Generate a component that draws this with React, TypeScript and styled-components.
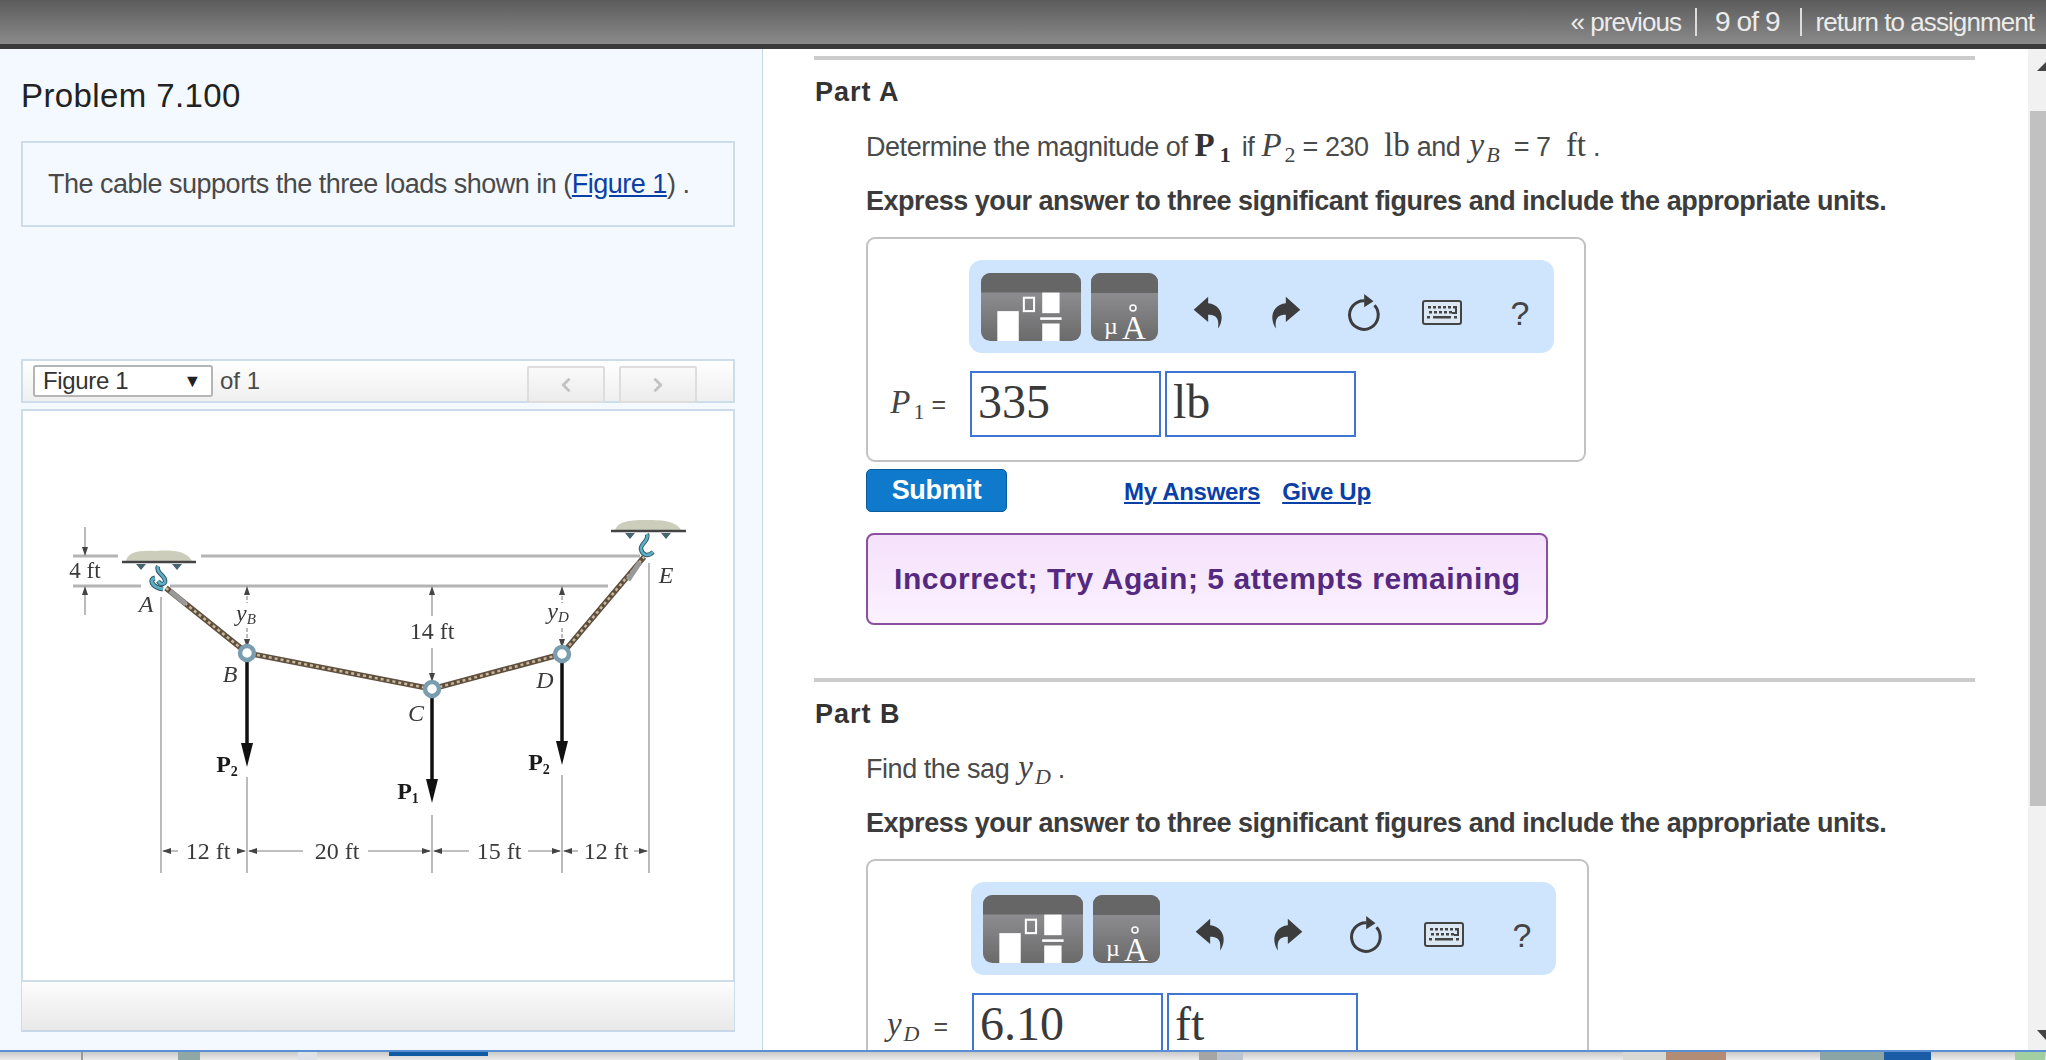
import styled, { createGlobalStyle } from "styled-components";
import { ChevronLeft, ChevronRight } from "lucide-react";

const GlobalStyle = createGlobalStyle`
  html, body {
    margin: 0;
    padding: 0;
    background: #fff;
    overflow: hidden;
  }
  body {
    font-family: "Liberation Sans", Arial, sans-serif;
    color: #4a4a4a;
  }
`;

const Page = styled.div`
  width: 2046px;
  height: 1060px;
  display: flex;
  flex-direction: column;
  overflow: hidden;
`;

const Header = styled.header`
  height: 49px;
  box-sizing: border-box;
  flex: none;
  display: flex;
  justify-content: flex-end;
  align-items: center;
  background: linear-gradient(#5c5c5c, #8a8a8a);
  border-bottom: 5px solid #3a3a3a;
  color: #ececec;
  font-size: 26px;
  letter-spacing: -0.93px;
`;

const NavItem = styled.span<{ $wide?: boolean }>`
  padding: ${(p) => (p.$wide ? "0 20px 0 18px" : "0 14px")};
  font-size: ${(p) => (p.$wide ? "28px" : "26px")};
  line-height: 28px;
  & + & {
    border-left: 2px solid #ddd;
  }
  &:last-child {
    padding-right: 12px;
  }
`;

const Main = styled.main`
  height: 1003px;
  box-sizing: border-box;
  flex: none;
  display: flex;
  border-bottom: 2px solid #5b8fd3;
`;

const LeftPanel = styled.aside`
  width: 763px;
  box-sizing: border-box;
  flex: none;
  padding: 27px 27px 0 21px;
  background: #f4f9ff;
  border-right: 1px solid #c6d6e6;
`;

const Title = styled.h1`
  margin: 0;
  font-size: 33px;
  line-height: 40px;
  font-weight: 400;
  color: #222;
  letter-spacing: 0.4px;
`;

const Statement = styled.div`
  margin-top: 25px;
  height: 86px;
  box-sizing: border-box;
  border: 2px solid #cddcea;
  padding: 0 25px;
  display: flex;
  align-items: center;
  font-size: 27px;
  letter-spacing: -0.5px;
`;

const FigureLink = styled.a`
  color: #0b3fa8;
  text-decoration: underline;
`;

const FigureBar = styled.div`
  margin-top: 132px;
  height: 44px;
  box-sizing: border-box;
  border: 2px solid #cddcea;
  padding: 0 36px 0 10px;
  display: flex;
  align-items: center;
  background: linear-gradient(#fff, #efefef);
  font-size: 24px;
`;

const SelectBox = styled.div`
  width: 180px;
  height: 32px;
  box-sizing: border-box;
  padding: 0 10px 0 8px;
  display: flex;
  align-items: center;
  justify-content: space-between;
  background: #fff;
  border: 2px solid #b5b5b5;
  border-radius: 3px;
  color: #333;
  letter-spacing: -0.35px;
`;

const SelectArrow = styled.span`
  font-size: 18px;
  color: #222;
`;

const OfText = styled.span`
  margin-left: 7px;
`;

const PagerGroup = styled.div`
  margin-left: auto;
  align-self: flex-end;
  margin-bottom: -2px;
  display: flex;
  gap: 14px;
`;

const PagerButton = styled.div`
  width: 78px;
  height: 37px;
  box-sizing: border-box;
  display: flex;
  align-items: center;
  justify-content: center;
  border: 2px solid #ddd;
  border-radius: 2px;
  background: linear-gradient(#fafafa, #ececec);
  color: #c2c2c2;
`;

const ImagePanel = styled.div`
  margin-top: 6px;
  height: 573px;
  box-sizing: border-box;
  border: 2px solid #cddcea;
  background: #fff;
`;

const FigureSvg = styled.svg`
  display: block;
  filter: blur(0.6px);
`;

const FigureFooter = styled.div`
  height: 50px;
  box-sizing: border-box;
  border: 1px solid #cddcea;
  border-top: none;
  border-bottom: 2px solid #c8d8e8;
  background: linear-gradient(#fcfcfc, #e9e9e9);
`;

const RightPane = styled.section`
  flex: 1;
  min-width: 0;
  box-sizing: border-box;
  padding: 7px 53px 0 51px;
  overflow: hidden;
  background: #fff;
`;

const Divider = styled.div<{ $gap?: number }>`
  height: 4px;
  margin-top: ${(p) => p.$gap ?? 0}px;
  background: #ccc;
`;

const PartTitle = styled.h2`
  margin: 17px 0 0 1px;
  font-size: 27px;
  line-height: 30px;
  color: #333;
  letter-spacing: 1px;
`;

const PartBody = styled.div`
  padding-left: 52px;
`;

const Question = styled.p`
  margin: 21px 0 0;
  height: 34px;
  font-size: 27px;
  line-height: 34px;
  letter-spacing: -0.45px;
  white-space: nowrap;
`;

const MathText = styled.span`
  font-family: "Liberation Serif", "Times New Roman", serif;
  font-size: 33px;
  letter-spacing: 0;
  color: #444;
`;

const MathBold = styled(MathText)`
  font-weight: 700;
  color: #333;
  margin-right: 6px;
  letter-spacing: 5px;
`;

const MathItalic = styled(MathText)`
  font-style: italic;
  letter-spacing: 1px;
  margin-right: 2px;
`;

const MathVar = styled(MathItalic)`
  margin: 0 5px 0 2px;
  letter-spacing: 2px;
`;

const MathSub = styled.sub`
  font-size: 22px;
  line-height: 0;
  vertical-align: -6px;
`;

const Instruction = styled.p`
  margin: 22px 0 0;
  height: 34px;
  font-size: 27px;
  line-height: 34px;
  font-weight: 700;
  color: #3c3c3c;
  letter-spacing: -0.47px;
  white-space: nowrap;
`;

const AnswerBox = styled.div<{ $w?: number }>`
  margin-top: 19px;
  height: 225px;
  box-sizing: border-box;
  width: ${(p) => p.$w ?? 720}px;
  padding-top: 21px;
  border: 2px solid #c2c2c2;
  border-radius: 9px;
`;

const Toolbar = styled.div<{ $shift?: number }>`
  margin-left: ${(p) => 101 + (p.$shift ?? 0)}px;
  width: 585px;
  height: 93px;
  box-sizing: border-box;
  padding-left: 12px;
  display: flex;
  align-items: center;
  background: #cfe5fd;
  border-radius: 13px;
  & > svg {
    flex: none;
  }
`;

const TemplateGap = styled.div`
  width: 10px;
  flex: none;
`;

const ToolsGroup = styled.div`
  margin-left: 11px;
  flex: none;
  display: flex;
`;

const ToolCell = styled.div`
  width: 78px;
  height: 60px;
  padding-top: 12px;
  box-sizing: border-box;
  display: flex;
  align-items: center;
  justify-content: center;
  color: #3d3d3d;
`;

const ToolSvg = styled.svg<{ $flip?: boolean }>`
  display: block;
  transform: ${(p) => (p.$flip ? "scaleX(-1)" : "none")};
`;

const HelpMark = styled.span`
  font-size: 34px;
  line-height: 40px;
  color: #444;
`;

const InputRow = styled.div<{ $shift?: number }>`
  margin-top: 18px;
  display: flex;
  align-items: center;
  padding-left: ${(p) => p.$shift ?? 0}px;
`;

const InputLabel = styled.div`
  width: 102px;
  box-sizing: border-box;
  padding: 0 24px 4px 0;
  text-align: right;
  font-size: 25px;
  white-space: nowrap;
`;

const AnswerInput = styled.div<{ $unit?: boolean }>`
  width: 191px;
  height: 66px;
  box-sizing: border-box;
  margin-left: ${(p) => (p.$unit ? "4px" : "0")};
  padding: 0 0 6px 6px;
  border: 2px solid #3f76d4;
  display: flex;
  align-items: center;
  font-family: "Liberation Serif", "Times New Roman", serif;
  font-size: 48px;
  color: #3a3a3a;
`;

const ActionRow = styled.div`
  margin-top: 7px;
  display: flex;
  align-items: center;
`;

const SubmitButton = styled.button`
  width: 141px;
  height: 43px;
  padding: 0;
  border: 1px solid #0b5a9c;
  border-radius: 5px;
  background: #0f7acb;
  color: #fff;
  font-family: inherit;
  font-size: 27px;
  font-weight: 700;
  letter-spacing: -0.3px;
`;

const ActionLink = styled.a<{ $first?: boolean }>`
  margin-left: ${(p) => (p.$first ? "117px" : "22px")};
  padding-top: 3px;
  color: #0b3fa8;
  font-size: 24px;
  font-weight: 700;
  letter-spacing: -0.3px;
  text-decoration: underline;
`;

const Message = styled.div`
  margin-top: 21px;
  width: 682px;
  height: 92px;
  box-sizing: border-box;
  padding-left: 26px;
  display: flex;
  align-items: center;
  border: 2px solid #8a4f9e;
  border-radius: 8px;
  background: linear-gradient(#f5e1fb, #fbf1ff);
  color: #54297f;
  font-size: 30px;
  font-weight: 700;
  white-space: nowrap;
  letter-spacing: 0.58px;
`;

const ScrollRail = styled.div`
  width: 18px;
  flex: none;
  background: #f1f1f1;
  display: flex;
  flex-direction: column;
  align-items: flex-start;
  overflow: hidden;
`;

const ScrollArrow = styled.div<{ $down?: boolean }>`
  width: 0;
  height: 0;
  margin: ${(p) => (p.$down ? "224px 0 0 9px" : "13px 0 0 9px")};
  border-left: 9px solid transparent;
  border-right: 9px solid transparent;
  ${(p) =>
    p.$down
      ? "border-top: 10px solid #444;"
      : "border-bottom: 9px solid #444;"}
`;

const ScrollThumb = styled.div`
  margin: 40px 0 0 2px;
  width: 16px;
  height: 695px;
  flex: none;
  background: #c1c1c1;
`;

const BottomStrip = styled.div`
  height: 8px;
  flex: none;
  display: flex;
  background: linear-gradient(#c9c9c9, #ececec);
`;

const StripPiece = styled.div<{ $w: number; $bg?: string; $short?: boolean }>`
  width: ${(p) => p.$w}px;
  flex: none;
  height: ${(p) => (p.$short ? "4px" : "auto")};
  background: ${(p) => p.$bg ?? "transparent"};
`;

const stripPieces: { w: number; bg?: string; short?: boolean }[] = [
  { w: 81 },
  { w: 2, bg: "#9a9a9a" },
  { w: 95 },
  { w: 22, bg: "#8fa7a5" },
  { w: 98 },
  { w: 19, bg: "#dfe3e8" },
  { w: 72 },
  { w: 99, bg: "#0f5ca5", short: true },
  { w: 711 },
  { w: 18, bg: "#a5a5a5" },
  { w: 26, bg: "#bcc4cf" },
  { w: 380 },
  { w: 43, bg: "#d8d8d4" },
  { w: 60, bg: "#b38c76" },
  { w: 94 },
  { w: 64, bg: "#8ba4a5" },
  { w: 47, bg: "#1a5ca5" },
  { w: 84 },
  { w: 30, bg: "#a2cfa2" },
];

function TemplateIcon() {
  return (
    <svg width="100" height="68" viewBox="0 0 98 66" preserveAspectRatio="none">
      <defs>
        <linearGradient id="tplBody" x1="0" y1="0" x2="0" y2="1">
          <stop offset="0" stopColor="#9b9ba0" />
          <stop offset="1" stopColor="#6a6a6a" />
        </linearGradient>
      </defs>
      <rect width="98" height="66" rx="9" fill="url(#tplBody)" />
      <path d="M0 19V9a9 9 0 0 1 9-9h80a9 9 0 0 1 9 9v10z" fill="#666" />
      <rect x="16" y="37" width="21" height="29" fill="#fff" />
      <rect x="42" y="24" width="10" height="13" fill="none" stroke="#fff" strokeWidth="2" />
      <rect x="60" y="19" width="17" height="20" fill="#fff" />
      <rect x="58" y="43" width="21" height="2.5" fill="#fff" />
      <rect x="60" y="49" width="17" height="17" fill="#fff" />
    </svg>
  );
}

function UnitsIcon() {
  return (
    <svg width="67" height="68" viewBox="0 0 67 68" overflow="visible">
      <rect width="67" height="68" rx="9" fill="url(#tplBody)" />
      <path d="M0 20V9a9 9 0 0 1 9-9h49a9 9 0 0 1 9 9v11z" fill="#666" />
      <circle cx="42" cy="35" r="3" fill="none" stroke="#fff" strokeWidth="1.5" />
      <text x="13" y="61" fontFamily="Liberation Serif" fontSize="24" fill="#fff">
        µ
      </text>
      <text x="31" y="66" fontFamily="Liberation Serif" fontSize="33" fill="#fff">
        A
      </text>
    </svg>
  );
}

function ReplyIcon({ flip }: { flip?: boolean }) {
  return (
    <ToolSvg $flip={flip} width="32" height="35" viewBox="40 42 95 103">
      <path
        d="M45 85 88 47v19c27 2 42 24 40 46-1 13-6 23-11 29 3-16 1-33-12-38-5-3-10-3-17-3v22z"
        fill="currentColor"
      />
    </ToolSvg>
  );
}

function ResetIcon() {
  return (
    <ToolSvg width="37" height="40" viewBox="500 35 110 120">
      <path
        d="M585 72A43 43 0 1 1 555 58"
        fill="none"
        stroke="currentColor"
        strokeWidth="9"
      />
      <path d="M554 38 582 60 554 78z" fill="currentColor" />
    </ToolSvg>
  );
}

function KeyboardIcon() {
  const keys = [6, 11, 16, 21, 26, 31];
  return (
    <ToolSvg width="40" height="25" viewBox="0 0 40 25">
      <rect x="1" y="1" width="38" height="23" rx="2" fill="#dbe8f4" stroke="#444" strokeWidth="2" />
      {keys.map((x) => (
        <rect key={x} x={x} y="6" width="3" height="2.5" fill="#444" />
      ))}
      {keys.slice(0, 5).map((x) => (
        <rect key={x} x={x + 1} y="11" width="3" height="2.5" fill="#444" />
      ))}
      <path d="M33 6h2v8h-5v-2h3z" fill="#444" />
      <rect x="5" y="16" width="3" height="2.5" fill="#444" />
      <rect x="11" y="16" width="18" height="2.5" fill="#444" />
      <rect x="32" y="16" width="3" height="2.5" fill="#444" />
    </ToolSvg>
  );
}

function AnswerToolbar({ shift }: { shift?: number }) {
  return (
    <Toolbar $shift={shift}>
      <TemplateIcon />
      <TemplateGap />
      <UnitsIcon />
      <ToolsGroup>
        <ToolCell>
          <ReplyIcon />
        </ToolCell>
        <ToolCell>
          <ReplyIcon flip />
        </ToolCell>
        <ToolCell>
          <ResetIcon />
        </ToolCell>
        <ToolCell>
          <KeyboardIcon />
        </ToolCell>
        <ToolCell>
          <HelpMark>?</HelpMark>
        </ToolCell>
      </ToolsGroup>
    </Toolbar>
  );
}

const serif = "Liberation Serif";
const dimLines = "#b4b4b4";

function DownArrow({ x, y }: { x: number; y: number }) {
  return <path d={`M${x - 6} ${y - 24}h12l-6 24z`} fill="#111" />;
}

function Node({ x, y }: { x: number; y: number }) {
  return <circle cx={x} cy={y} r="7" fill="#fff" stroke="#7a9db0" strokeWidth="4.5" />;
}

function FigureLabel({
  x,
  y,
  size = 24,
  italic,
  bold,
  children,
}: {
  x: number;
  y: number;
  size?: number;
  italic?: boolean;
  bold?: boolean;
  children: React.ReactNode;
}) {
  return (
    <text
      x={x}
      y={y}
      textAnchor="middle"
      fontFamily={serif}
      fontSize={size}
      fontStyle={italic ? "italic" : "normal"}
      fontWeight={bold ? 700 : 400}
      fill={bold ? "#1a1a1a" : "#3a3a3a"}
    >
      {children}
    </text>
  );
}

function CableFigure() {
  const cable = "M166 588 247 653 432 689 562 654 644 557";
  return (
    <FigureSvg width="710" height="569" viewBox="23 411 710 569">
      <g stroke={dimLines} strokeWidth="3" fill="none">
        <path d="M73 556H118M201 556H640M73 586H141M170 586H608" />
      </g>
      <g stroke="#aaa" strokeWidth="1.6" fill="none">
        <path d="M161 597V873M649 563V873" />
        <path d="M247 777V873M432 815V873M562 775V873" />
        <path d="M247 590V603M247 628V645" strokeDasharray="4 2" />
        <path d="M432 590V616M432 648V682" />
        <path d="M562 590V603M562 628V645" strokeDasharray="4 2" />
        <path d="M85 527V552M85 590V615" />
        <path d="M163 851H178M238 851H245M249 851H303M368 851H430M434 851H469M528 851H560M564 851H578M634 851H647" />
      </g>
      <g fill="#444">
        <path d="M85 556l-3-9h6zM85 586l-3 9h6z" />
        <path d="M247 586l-3 9h6zM247 648l-3-9h6zM432 586l-3 9h6zM432 682l-3-9h6zM562 586l-3 9h6zM562 648l-3-9h6z" />
        <path d="M162 851l9-3v6zM246 851l-9-3v6zM248 851l9-3v6zM431 851l-9-3v6zM433 851l9-3v6zM561 851l-9-3v6zM563 851l9-3v6zM648 851l-9-3v6z" />
      </g>

      <path d="M126 561c2-9 12-11 30-10 14-1 30-1 36 10z" fill="#cdcdbc" />
      <path d="M122 562H196" stroke="#444" strokeWidth="2.5" />
      <path d="M136 564l10 0-5 6zM172 564l10 0-5 6z" fill="#47656f" />
      <path d="M615 530c3-8 12-10 30-10 14 0 30 0 36 10z" fill="#cdcdbc" />
      <path d="M611 531H686" stroke="#444" strokeWidth="2.5" />
      <path d="M625 533l10 0-5 6zM661 533l10 0-5 6z" fill="#47656f" />

      <path d="M158 566c-3 6 6 9 7 14 1 4-4 6-7 1" fill="none" stroke="#356" strokeWidth="4.5" />
      <path d="M158 566c-3 6 6 9 7 14 1 4-4 6-7 1" fill="none" stroke="#5bb0c8" strokeWidth="2.5" />
      <path d="M155 578c-6 1-4 9 8 11" fill="none" stroke="#356" strokeWidth="5" />
      <path d="M155 578c-6 1-4 9 8 11" fill="none" stroke="#5bb0c8" strokeWidth="3" />
      <path d="M647 534c3 6-7 10-6 15 1 5 6 9 12 3" fill="none" stroke="#356" strokeWidth="4.5" />
      <path d="M647 534c3 6-7 10-6 15 1 5 6 9 12 3" fill="none" stroke="#5bb0c8" strokeWidth="2.5" />

      <path d={cable} fill="none" stroke="#5f4f3e" strokeWidth="5.5" />
      <path d={cable} fill="none" stroke="#c9b89c" strokeWidth="2.5" strokeDasharray="3 3" />
      <path d="M170 591 186 604M640 562 628 580" stroke="#999" strokeWidth="5" />

      <path d="M247 660V744M432 696V780M562 661V742" stroke="#111" strokeWidth="3.5" />
      <DownArrow x={247} y={767} />
      <DownArrow x={432} y={803} />
      <DownArrow x={562} y={765} />
      <Node x={247} y={653} />
      <Node x={432} y={689} />
      <Node x={562} y={654} />

      <FigureLabel x={85} y={578} size={23}>4 ft</FigureLabel>
      <FigureLabel x={146} y={612} italic>A</FigureLabel>
      <FigureLabel x={230} y={682} italic>B</FigureLabel>
      <FigureLabel x={416} y={721} italic>C</FigureLabel>
      <FigureLabel x={545} y={688} italic>D</FigureLabel>
      <FigureLabel x={666} y={583} italic>E</FigureLabel>
      <FigureLabel x={432} y={639}>14 ft</FigureLabel>
      <FigureLabel x={246} y={621} italic>
        y<tspan fontSize="15" dy="3">B</tspan>
      </FigureLabel>
      <FigureLabel x={558} y={619} italic>
        y<tspan fontSize="15" dy="3">D</tspan>
      </FigureLabel>
      <FigureLabel x={227} y={772} bold>
        P<tspan fontSize="14" dy="4">2</tspan>
      </FigureLabel>
      <FigureLabel x={408} y={799} bold>
        P<tspan fontSize="14" dy="4">1</tspan>
      </FigureLabel>
      <FigureLabel x={539} y={770} bold>
        P<tspan fontSize="14" dy="4">2</tspan>
      </FigureLabel>
      <FigureLabel x={208} y={859}>12 ft</FigureLabel>
      <FigureLabel x={337} y={859}>20 ft</FigureLabel>
      <FigureLabel x={499} y={859}>15 ft</FigureLabel>
      <FigureLabel x={606} y={859}>12 ft</FigureLabel>
    </FigureSvg>
  );
}

export default function App() {
  return (
    <Page>
      <GlobalStyle />
      <Header>
        <NavItem>« previous</NavItem>
        <NavItem $wide>9 of 9</NavItem>
        <NavItem>return to assignment</NavItem>
      </Header>
      <Main>
        <LeftPanel>
          <Title>Problem 7.100</Title>
          <Statement>
            <span>
              The cable supports the three loads shown in (
              <FigureLink href="#">Figure 1</FigureLink>) .
            </span>
          </Statement>
          <FigureBar>
            <SelectBox>
              <span>Figure 1</span>
              <SelectArrow>▼</SelectArrow>
            </SelectBox>
            <OfText>of 1</OfText>
            <PagerGroup>
              <PagerButton>
                <ChevronLeft size={22} strokeWidth={3} />
              </PagerButton>
              <PagerButton>
                <ChevronRight size={22} strokeWidth={3} />
              </PagerButton>
            </PagerGroup>
          </FigureBar>
          <ImagePanel>
            <CableFigure />
          </ImagePanel>
          <FigureFooter />
        </LeftPanel>
        <RightPane>
          <Divider />
          <PartTitle>Part A</PartTitle>
          <PartBody>
            <Question>
              Determine the magnitude of <MathBold>P<MathSub>1</MathSub></MathBold>if{" "}
              <MathItalic>P</MathItalic>
              <MathText><MathSub>2</MathSub></MathText> = 230 <MathText>&nbsp;lb</MathText> and{" "}
              <MathVar>y<MathSub>B</MathSub></MathVar> = 7 <MathText>&nbsp;ft</MathText> .
            </Question>
            <Instruction>
              Express your answer to three significant figures and include the appropriate units.
            </Instruction>
            <AnswerBox>
              <AnswerToolbar />
              <InputRow>
                <InputLabel>
                  <MathItalic>P</MathItalic>
                  <MathText><MathSub>1</MathSub></MathText> =
                </InputLabel>
                <AnswerInput>335</AnswerInput>
                <AnswerInput $unit>lb</AnswerInput>
              </InputRow>
            </AnswerBox>
            <ActionRow>
              <SubmitButton>Submit</SubmitButton>
              <ActionLink $first href="#">My Answers</ActionLink>
              <ActionLink href="#">Give Up</ActionLink>
            </ActionRow>
            <Message>Incorrect; Try Again; 5 attempts remaining</Message>
          </PartBody>
          <Divider $gap={53} />
          <PartTitle>Part B</PartTitle>
          <PartBody>
            <Question>
              Find the sag <MathVar>y<MathSub>D</MathSub></MathVar>.
            </Question>
            <Instruction>
              Express your answer to three significant figures and include the appropriate units.
            </Instruction>
            <AnswerBox $w={723}>
              <AnswerToolbar shift={2} />
              <InputRow $shift={2}>
                <InputLabel>
                  <MathVar>y<MathSub>D</MathSub></MathVar> =
                </InputLabel>
                <AnswerInput>6.10</AnswerInput>
                <AnswerInput $unit>ft</AnswerInput>
              </InputRow>
            </AnswerBox>
          </PartBody>
        </RightPane>
        <ScrollRail>
          <ScrollArrow />
          <ScrollThumb />
          <ScrollArrow $down />
        </ScrollRail>
      </Main>
      <BottomStrip>
        {stripPieces.map((piece, i) => (
          <StripPiece key={i} $w={piece.w} $bg={piece.bg} $short={piece.short} />
        ))}
      </BottomStrip>
    </Page>
  );
}
